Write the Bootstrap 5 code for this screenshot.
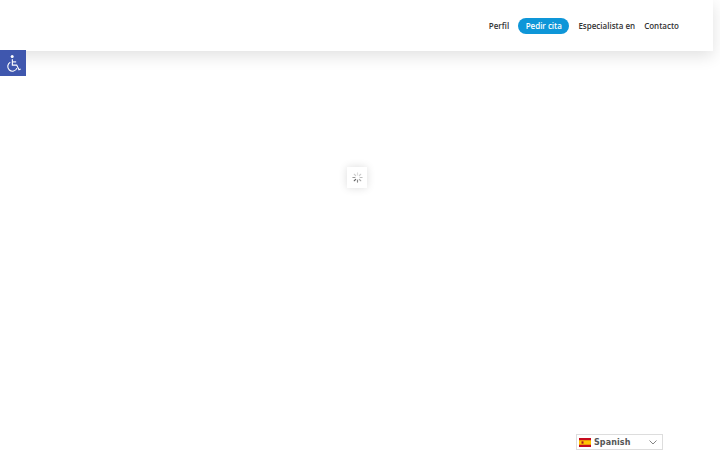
<!DOCTYPE html>
<html lang="es">
<head>
  <meta charset="UTF-8">
  <title>Pedir cita</title>
  <link href="https://cdn.jsdelivr.net/npm/bootstrap@5.3.0/dist/css/bootstrap.min.css" rel="stylesheet">
  <style>
    html, body { height: 100%; overflow: hidden; background: #fff; }
    .top-bar { width: 713px; height: 51px; background: #fff; box-shadow: 0 5px 15px rgba(0,0,0,.12); padding-right: 34px; gap: 9px; }
    .top-link { font: 600 8px "Open Sans", sans-serif; color: #333; text-decoration: none; }
    .top-pill { font: 600 8px "Open Sans", sans-serif; color: #fff; background: #0e96d8; border-radius: 20px; padding: 0 7.5px; height: 16px; line-height: 16px; text-decoration: none; }
    .access-btn { position: fixed; left: 0; top: 50px; width: 26px; height: 26px; background: #3f57ae; }
    .loader-box { position: fixed; left: 347px; top: 167px; width: 20px; height: 21px; background: #fff; box-shadow: 0 0 8px rgba(0,0,0,.14); }
    .lang-box { position: fixed; left: 576px; top: 434px; width: 87px; height: 16px; background: #fff; border: 1px solid #ddd; font: 700 8px "DejaVu Sans", sans-serif; letter-spacing: .1px; color: #555; padding: 0 5px 0 2px; }
    .lang-box span { margin-left: 3px; }
  </style>
</head>
<body>
  <!-- Barra superior -->
  <nav class="top-bar d-flex justify-content-end align-items-center">
    <a class="top-link" href="#">Perfil</a>
    <a class="top-pill" href="#">Pedir cita</a>
    <a class="top-link" href="#">Especialista en</a>
    <a class="top-link" href="#">Contacto</a>
  </nav>

  <!-- Boton de accesibilidad -->
  <a class="access-btn d-flex align-items-center justify-content-center" href="#" aria-label="Accesibilidad">
    <svg width="17" height="19" viewBox="0 0 18 19" fill="none" stroke="#fff" stroke-width="1.2">
      <circle cx="7.6" cy="2.2" r="1.6" fill="#fff" stroke="none"/>
      <path d="M7.8 5v6.2h4.6l2.4 5 1.8-.8"/>
      <path d="M7.8 7.8h4"/>
      <path d="M5.6 8.2a5 5 0 1 0 7 6.2"/>
    </svg>
  </a>

  <!-- Cargando -->
  <div class="loader-box d-flex align-items-center justify-content-center">
    <svg width="11" height="11" viewBox="0 0 12 12" stroke-width="1.3" stroke-linecap="round">
      <path d="M6 1v2.2" stroke="#ddd"/>
      <path d="M9.5 2.5 8 4" stroke="#ccc"/>
      <path d="M11 6H8.8" stroke="#bbb"/>
      <path d="M9.5 9.5 8 8" stroke="#aaa"/>
      <path d="M6 11V8.8" stroke="#888"/>
      <path d="M2.5 9.5 4 8" stroke="#666"/>
      <path d="M1 6h2.2" stroke="#999"/>
      <path d="M2.5 2.5 4 4" stroke="#ccc"/>
    </svg>
  </div>

  <!-- Selector de idioma -->
  <div class="lang-box d-flex align-items-center">
    <svg class="flex-shrink-0" width="12" height="9" viewBox="0 0 12 10" preserveAspectRatio="none">
      <rect width="12" height="10" fill="#c60b1e"/>
      <rect y="2.5" width="12" height="5" fill="#ffc400"/>
      <rect x="2.5" y="3.7" width="2" height="2.6" fill="#ad1519"/>
    </svg>
    <span>Spanish</span>
    <svg class="ms-auto" width="8" height="5" viewBox="0 0 8 5" fill="none" stroke="#666" stroke-width=".8">
      <path d="M.5.5 4 4 7.5.5"/>
    </svg>
  </div>
</body>
</html>
